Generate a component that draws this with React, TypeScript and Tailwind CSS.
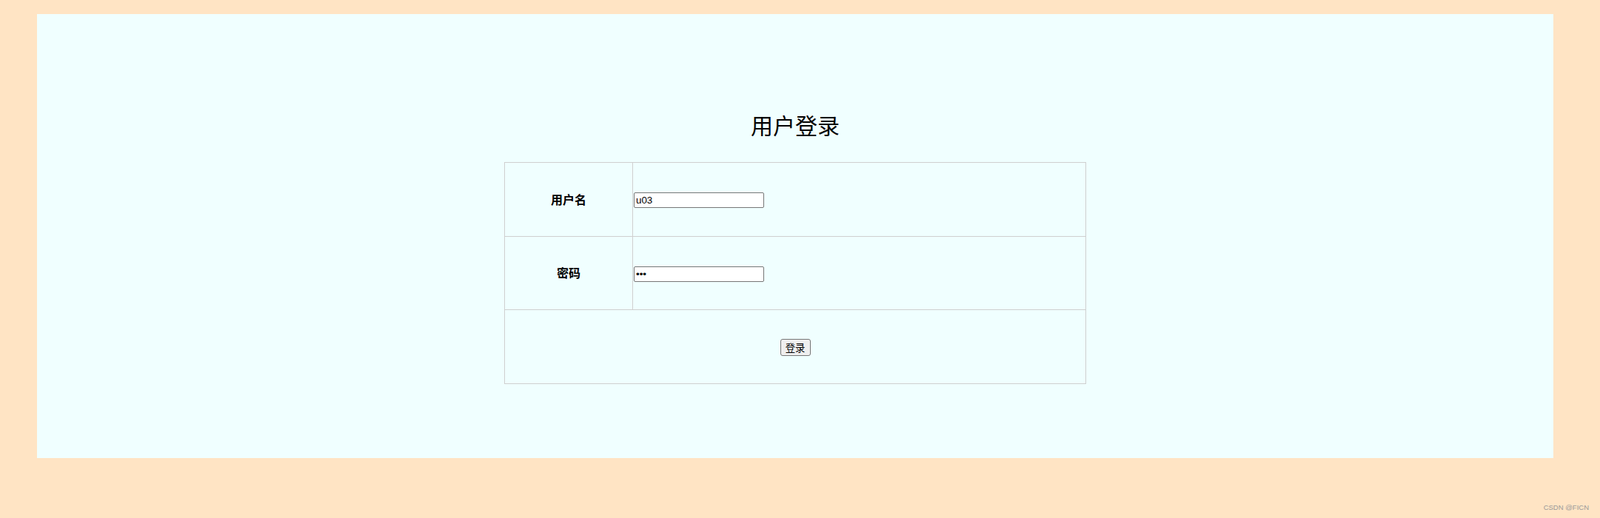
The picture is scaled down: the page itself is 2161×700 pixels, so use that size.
import React from "react";

export default function App() {
  const cjk = { fontFamily: '"Noto Sans CJK SC", "Noto Sans", sans-serif' };
  return (
    <div className="relative min-h-[700px] w-full bg-[#FFE4C4] pl-[50px] pt-[19px]" style={cjk}>
      <div className="flex h-[600px] w-[2048px] flex-col items-center bg-[#F0FFFF]">
        <h2 className="mt-[131px] h-[36px] text-[30px] font-normal leading-[36px] text-black">用户登录</h2>
        <table className="mt-[33px] w-[786px] border-collapse border border-[#cfcfcf]">
          <tbody>
            <tr className="h-[100px]">
              <th className="w-[173px] border border-[#cfcfcf] pb-[2px] text-center text-[16px] font-bold text-black">用户名</th>
              <td className="border border-[#cfcfcf] px-[1px]">
                <input
                  type="text"
                  defaultValue="u03"
                  className="mt-[2px] block h-[21px] w-[176px] rounded-[2px] border border-[#767676] bg-white px-[2px] text-[13.33px] text-black outline-none"
                  style={{ fontFamily: '"Liberation Sans", Arial, sans-serif' }}
                />
              </td>
            </tr>
            <tr className="h-[99px]">
              <th className="border border-[#cfcfcf] pb-[2px] text-center text-[16px] font-bold text-black">密码</th>
              <td className="border border-[#cfcfcf] px-[1px]">
                <input
                  type="password"
                  defaultValue="abc"
                  className="mt-[2px] block h-[21px] w-[176px] rounded-[2px] border border-[#767676] bg-white px-[2px] text-[13.33px] text-black outline-none"
                  style={{ fontFamily: '"Liberation Sans", Arial, sans-serif' }}
                />
              </td>
            </tr>
            <tr className="h-[100px]">
              <td colSpan={2} className="border border-[#cfcfcf] text-center">
                <button className="inline-flex h-[23px] w-[41px] items-center justify-center rounded-[3px] border border-[#767676] bg-[#efefef] text-[13.33px] leading-none text-black">
                  登录
                </button>
              </td>
            </tr>
          </tbody>
        </table>
      </div>
      <div
        className="absolute bottom-[10px] right-[15px] text-[9.5px] leading-none text-[#9a9a9a]"
        style={{ fontFamily: '"Liberation Sans", Arial, sans-serif' }}
      >
        CSDN @FICN
      </div>
    </div>
  );
}
